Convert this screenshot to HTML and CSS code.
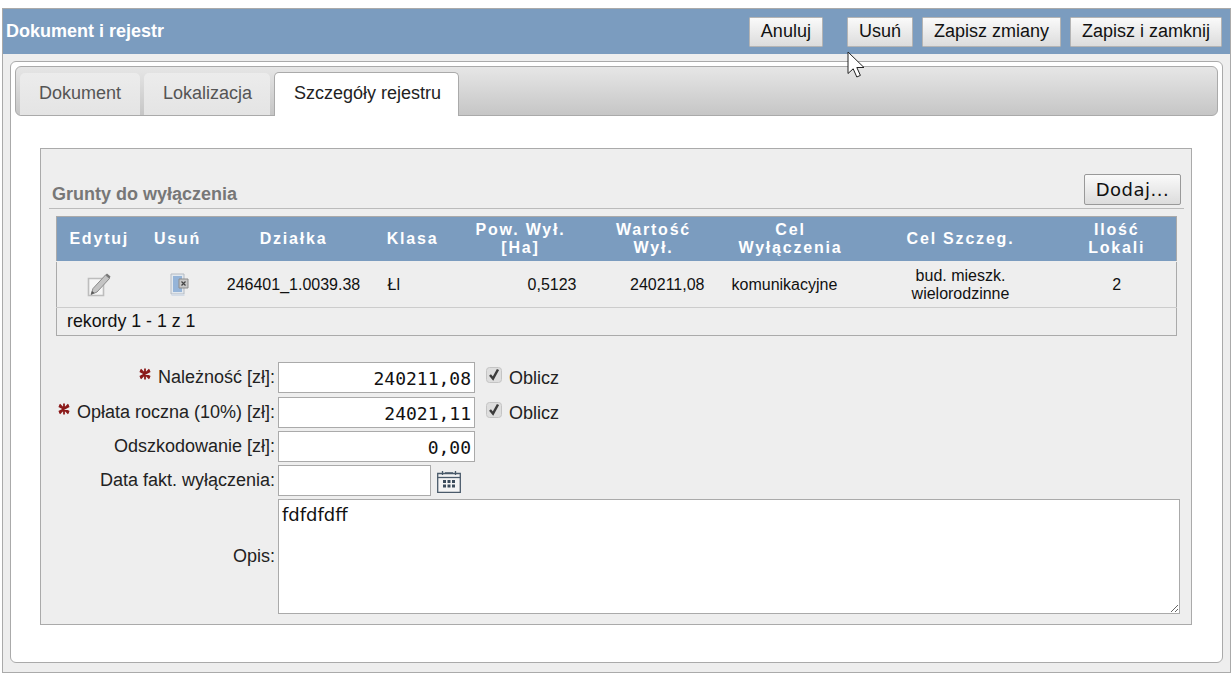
FILE: index.html
```html
<!DOCTYPE html>
<html lang="pl">
<head>
<meta charset="utf-8">
<title>Dokument i rejestr</title>
<link rel="stylesheet" href="styles.css">
</head>
<body>
<div class="window">
  <header class="titlebar">
    <h1 class="title">Dokument i rejestr</h1>
    <div class="actions">
      <button class="btn btn-cancel" type="button">Anuluj</button>
      <button class="btn" type="button">Usuń</button>
      <button class="btn" type="button">Zapisz zmiany</button>
      <button class="btn" type="button">Zapisz i zamknij</button>
    </div>
  </header>
  <svg class="cursor" width="20" height="28" viewBox="0 0 20 28"><path d="M1 1v21.500l5.200-4.700 3.600 8.200 3.600-1.600-3.600-7.900h7.200z" fill="#fff" stroke="#222" stroke-width="1"/></svg>
  <main class="panel">
    <nav class="tabs">
      <a class="tab tab-1">Dokument</a>
      <a class="tab tab-2">Lokalizacja</a>
      <a class="tab tab-active">Szczegóły rejestru</a>
    </nav>
    <section class="group">
      <div class="legend">
        <h2 class="legend-title">Grunty do wyłączenia</h2>
        <button class="btn-add" type="button">Dodaj...</button>
      </div>
      <table class="grid">
        <colgroup>
          <col class="c1"><col class="c2"><col class="c3"><col class="c4"><col class="c5"><col class="c6"><col class="c7"><col class="c8"><col class="c9">
        </colgroup>
        <thead>
          <tr>
            <th>Edytuj</th><th>Usuń</th><th>Działka</th><th>Klasa</th><th>Pow. Wył.<br>[Ha]</th><th>Wartość<br>Wył.</th><th>Cel<br>Wyłączenia</th><th>Cel Szczeg.</th><th>Ilość<br>Lokali</th>
          </tr>
        </thead>
        <tbody>
          <tr>
            <td class="center">
              <svg class="icon" width="26" height="26" viewBox="0 0 26 26"><path d="M2.500 6.500h15v17h-15z" fill="#f6f6f6" stroke="#bdbdbd" stroke-width="1.600"/><path d="M5 22.500l2-6L19.500 3l4 3.500L11 20z" fill="#c4c4c4" stroke="#8a8a8a" stroke-width="1"/><path d="M19.500 3l1.500-1.500 3.500 3-1 2z" fill="#777"/><path d="M5 22.500l1-3.500 2.500 2z" fill="#555"/></svg>
            </td>
            <td class="center">
              <svg class="icon icon-del" width="22" height="26" viewBox="0 0 22 26"><path d="M2 2h13v20H2z" fill="#e2e8ee" stroke="#b4bac2" stroke-width="1"/><path d="M4 4h9v16H4z" fill="#95b4d8"/><path d="M2.500 22h13v2h-13z" fill="#d4dce6"/><path d="M10 7h9v9h-9z" fill="#c8c8c8" stroke="#8c8c8c"/><path d="M12.500 9.500l4 4m0-4l-4 4" stroke="#444" stroke-width="1.200"/></svg>
            </td>
            <td class="center">246401_1.0039.38</td>
            <td class="left">Łl</td>
            <td class="right">0,5123</td>
            <td class="right">240211,08</td>
            <td class="left">komunikacyjne</td>
            <td class="center">bud. mieszk.<br>wielorodzinne</td>
            <td class="center">2</td>
          </tr>
        </tbody>
        <tfoot>
          <tr><td class="pager" colspan="9">rekordy 1 - 1 z 1</td></tr>
        </tfoot>
      </table>
      <form class="form">
        <div class="row row-first">
          <label class="label"><svg class="req" width="12" height="12" viewBox="0 0 12 12"><path d="M6 .5v11M.8 3.200l10.400 5.600M.8 8.800l10.400-5.600M1.500 1.500l9 9M10.500 1.500l-9 9" stroke="#8b1a1a" stroke-width="1.800"/></svg>Należność [zł]:</label>
          <input class="input num" value="240211,08">
          <span class="check"><svg width="16" height="16" viewBox="0 0 16 16"><rect x=".5" y=".5" width="15" height="15" rx="3" fill="#dedede" stroke="#c4c4c4"/><path d="M4 8l3 3.500L12 2.500" fill="none" stroke="#3c3c3c" stroke-width="2.500"/></svg>Oblicz</span>
        </div>
        <div class="row">
          <label class="label"><svg class="req" width="12" height="12" viewBox="0 0 12 12"><path d="M6 .5v11M.8 3.200l10.400 5.600M.8 8.800l10.400-5.600M1.500 1.500l9 9M10.500 1.500l-9 9" stroke="#8b1a1a" stroke-width="1.800"/></svg>Opłata roczna (10%) [zł]:</label>
          <input class="input num" value="24021,11">
          <span class="check"><svg width="16" height="16" viewBox="0 0 16 16"><rect x=".5" y=".5" width="15" height="15" rx="3" fill="#dedede" stroke="#c4c4c4"/><path d="M4 8l3 3.500L12 2.500" fill="none" stroke="#3c3c3c" stroke-width="2.500"/></svg>Oblicz</span>
        </div>
        <div class="row">
          <label class="label">Odszkodowanie [zł]:</label>
          <input class="input num" value="0,00">
        </div>
        <div class="row">
          <label class="label">Data fakt. wyłączenia:</label>
          <input class="input date">
          <svg class="cal" width="24" height="24" viewBox="0 0 24 24"><path d="M.700 4.500h22.600v18.800H.700z" fill="#f4f4f4" stroke="#4a5a6a" stroke-width="1.300"/><path d="M.700 8.500h22.600" stroke="#4a5a6a" stroke-width="1.300"/><path d="M5.500 2v4M18.500 2v4M8 4h8" stroke="#4a5a6a" stroke-width="1.300"/><path d="M6 11h3v3H6zM10.500 11h3v3h-3zM15 11h3v3h-3zM6 15.500h3v3H6zM10.500 15.500h3v3h-3zM15 15.500h3v3h-3z" fill="#3c4c5c"/></svg>
        </div>
        <div class="row row-area">
          <label class="label">Opis:</label>
          <textarea class="area">fdfdfdff</textarea>
        </div>
      </form>
    </section>
  </main>
</div>
</body>
</html>
```
FILE: styles.css
```css
* { box-sizing: border-box; }
html, body { margin: 0; padding: 0; background: #fff; }
body {
  height: 676px;
  overflow: hidden;
  padding: 8px 1px 0 2px;
  font-family: "Liberation Sans", Arial, sans-serif;
  font-size: 18px;
  color: #111;
}
.window {
  position: relative;
  height: 665px;
  background: #eee;
  border: 1px solid #aaa;
}
.titlebar {
  height: 45px;
  background: #7b9cbf;
  display: flex;
  align-items: center;
  justify-content: space-between;
  padding: 0 8px 0 3px;
}
.title {
  margin: 0;
  font-size: 18px;
  font-weight: bold;
  color: #fff;
}
.actions { display: flex; gap: 9px; }
.btn {
  height: 30px;
  padding: 0 11px;
  font: 18px "Liberation Sans", Arial, sans-serif;
  color: #111;
  background: linear-gradient(#fafafa, #dcdcdc);
  border: 1px solid #b4b4b4;
  border-radius: 1px;
}
.btn-cancel { margin-right: 15px; }
.cursor { position: absolute; left: 844px; top: 42px; z-index: 3; }
.panel {
  margin: 7px 7px 0 7px;
  height: 602px;
  background: #fff;
  border: 1px solid #aaa;
  border-radius: 6px;
  padding: 4px;
}
.tabs {
  height: 50px;
  background: linear-gradient(#e6e6e6, #c6c6c6);
  border: 1px solid #aaa;
  border-radius: 6px;
  display: flex;
  gap: 4px;
  padding: 6px 0 0 4px;
}
.tab {
  height: 42px;
  padding: 0 19px 2px;
  display: flex;
  align-items: center;
  font-size: 18px;
  white-space: nowrap;
  color: #555;
  background: linear-gradient(#ececec, #e4e4e4);
  border-radius: 5px 5px 0 0;
}
.tab-1 { width: 120px; }
.tab-2 { width: 126px; }
.tab-active {
  width: 185px;
  padding: 0 17px 2px 19px;
  background: #fff;
  color: #222;
  border: 1px solid #aaa;
  border-bottom: none;
  margin-top: -1px;
  height: 44px;
  position: relative;
}
.group {
  margin: 32px 26px 0 25px;
  height: 477px;
  background: #eee;
  border: 1px solid #aaa;
  padding: 0 7px 0 8px;
}
.legend {
  height: 60px;
  display: flex;
  align-items: flex-end;
  justify-content: space-between;
  border-bottom: 1px solid #bbb;
  padding: 0 3px 3px 3px;
}
.legend-title {
  margin: 0 0 -1px;
  font-size: 18px;
  font-weight: bold;
  color: #777;
  line-height: 24px;
}
.btn-add {
  width: 97px;
  height: 31px;
  padding: 0;
  font: 18px "DejaVu Sans", sans-serif;
  letter-spacing: .5px;
  color: #111;
  background: linear-gradient(#fafafa, #dcdcdc);
  border: 1px solid #999;
  border-radius: 2px;
}
.grid {
  margin: 7px 0 0 7px;
  width: 1121px;
  table-layout: fixed;
  border-collapse: collapse;
  border: 1px solid #aaa;
  font-size: 16px;
}
.c1 { width: 85px; }
.c2 { width: 72px; }
.c3 { width: 160px; }
.c4 { width: 78px; }
.c5 { width: 138px; }
.c6 { width: 128px; }
.c7 { width: 146px; }
.c8 { width: 194px; }
.c9 { width: 119px; }
.grid th {
  height: 45px;
  padding: 0;
  background: #7b9cbf;
  color: #fff;
  font-size: 16px;
  line-height: 18px;
  font-weight: bold;
  letter-spacing: 1.8px;
  text-align: center;
  border-bottom: 1px solid #eee;
}
.grid td { height: 46px; line-height: 18px; border-bottom: 1px solid #ccc; padding: 0; }
.center { text-align: center; }
.left { text-align: left; padding-left: 14px !important; }
.right { text-align: right; padding-right: 13px !important; }
.icon { display: block; margin: 0 auto; }
.icon-del { position: relative; left: 2px; }
.grid .pager { height: 28px; padding: 0 0 2px 10px; font-size: 17.8px; border-bottom: none; }
.form { margin-top: 26px; }
.row { display: flex; align-items: center; height: 31px; margin-bottom: 3px; }
.row-first { margin-bottom: 4px; }
.row-area { height: 115px; }
.label { width: 226px; margin-right: 3px; text-align: right; font-size: 18px; color: #222; position: relative; }
.req { margin-right: 7px; position: relative; top: -3px; }
.input {
  height: 31px;
  width: 197px;
  border: 1px solid #aaa;
  background: #fff;
  padding: 1px 3px 0;
  font: 18px "DejaVu Sans Mono", monospace;
  color: #111;
}
.num { text-align: right; }
.date { width: 153px; }
.cal { margin-left: 6px; }
.check { display: flex; align-items: center; gap: 7px; margin-left: 11px; padding-top: 2px; font-size: 18px; color: #222; }
.check svg { position: relative; top: -4px; }
.area {
  width: 902px;
  height: 115px;
  border: 1px solid #aaa;
  background: #fff;
  padding: 4px 3px 3px;
  font: 18px "DejaVu Sans", sans-serif;
  color: #111;
  resize: both;
}
```
